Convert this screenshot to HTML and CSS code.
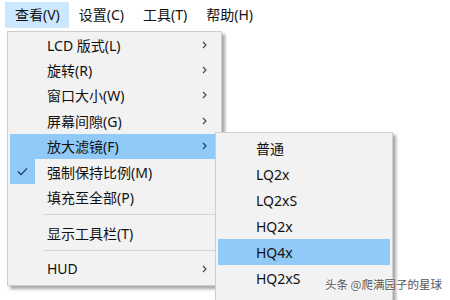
FILE: index.html
```html
<!DOCTYPE html>
<html lang="zh-CN">
<head>
  <meta charset="UTF-8" />
  <title>查看菜单</title>
  <link rel="stylesheet" href="styles.css">
</head>
<body>
  <div class="menubar">
    <span class="bar-item open">查看(V)</span>
    <span class="bar-item">设置(C)</span>
    <span class="bar-item">工具(T)</span>
    <span class="bar-item">帮助(H)</span>
  </div>

  <div class="menu main-menu">
    <div class="row"><span class="label">LCD 版式(L)</span><svg class="arrow" viewBox="0 0 5 8"><polyline points="1,1 4,4 1,7" /></svg></div>
    <div class="row"><span class="label">旋转(R)</span><svg class="arrow" viewBox="0 0 5 8"><polyline points="1,1 4,4 1,7" /></svg></div>
    <div class="row"><span class="label">窗口大小(W)</span><svg class="arrow" viewBox="0 0 5 8"><polyline points="1,1 4,4 1,7" /></svg></div>
    <div class="row"><span class="label">屏幕间隙(G)</span><svg class="arrow" viewBox="0 0 5 8"><polyline points="1,1 4,4 1,7" /></svg></div>
    <div class="row active"><span class="label">放大滤镜(F)</span><svg class="arrow" viewBox="0 0 5 8"><polyline points="1,1 4,4 1,7" /></svg></div>
    <div class="row checked">
      <span class="check"><svg viewBox="0 0 12 10"><polyline points="1,5 4.5,8.5 11,1.5" /></svg></span>
      <span class="label">强制保持比例(M)</span>
    </div>
    <div class="row"><span class="label">填充至全部(P)</span></div>
    <div class="sep"></div>
    <div class="row"><span class="label">显示工具栏(T)</span></div>
    <div class="sep"></div>
    <div class="row"><span class="label">HUD</span><svg class="arrow" viewBox="0 0 5 8"><polyline points="1,1 4,4 1,7" /></svg></div>
  </div>

  <div class="menu sub-menu">
    <div class="row"><span class="label">普通</span></div>
    <div class="row"><span class="label">LQ2x</span></div>
    <div class="row"><span class="label">LQ2xS</span></div>
    <div class="row"><span class="label">HQ2x</span></div>
    <div class="row active"><span class="label">HQ4x</span></div>
    <div class="row"><span class="label">HQ2xS</span></div>
    <div class="row"><span class="label">SHQ4x</span></div>
  </div>

  <div class="watermark">头条 @爬满园子的星球</div>
</body>
</html>
```

FILE: styles.css
```css
body { margin: 0; width: 450px; height: 300px; overflow: hidden; position: relative; background: #fff; color: #111; font-family: "Noto Sans", "Noto Sans CJK SC", sans-serif; font-size: 14px; }
.menubar { height: 30px; display: flex; align-items: flex-start; padding-left: 5px; }
.bar-item { margin-top: 2px; height: 26px; line-height: 26px; padding: 0 9px 0 10px; }
.bar-item.open { background: #cce8ff; }
/* drop-down menus */
.menu { position: absolute; background: #f2f2f2; border: 1px solid #cfcfcf; padding: 0 2px 3px; box-shadow: 3px 3px 3px rgba(0,0,0,0.35); }
.main-menu { left: 7px; top: 31px; width: 209px; }
.sub-menu { left: 215px; top: 132px; width: 172px; padding-top: 2px; }
.row { position: relative; display: flex; align-items: center; height: 25.4px; padding-left: 37px; padding-right: 12px; }
.sub-menu .row { height: 26px; padding-left: 38px; }
.row .label { flex: 1; white-space: nowrap; }
.row.active { background: #91c9f7; }
.arrow { width: 5px; height: 8px; fill: none; stroke: #444; stroke-width: 1.1; }
.row.active .arrow { stroke: #1d3f66; }
.check { position: absolute; left: 0; top: 0; width: 25px; height: 25.4px; background: #91c9f7; display: flex; align-items: center; justify-content: center; }
.check svg { width: 11px; height: 9px; fill: none; stroke: #1a3a5c; stroke-width: 1.4; }
.sep { height: 10.5px; display: flex; align-items: center; padding-left: 33px; }
.sep::after { content: ""; flex: 1; border-top: 1px solid #d5d5d5; }
.watermark { position: absolute; left: 325px; top: 276px; line-height: 16px; font-size: 11.5px; white-space: nowrap; color: #555; text-shadow: 0 0 2px #fff, 0 0 2px #fff; font-family: "Noto Sans CJK SC", sans-serif; }
```
